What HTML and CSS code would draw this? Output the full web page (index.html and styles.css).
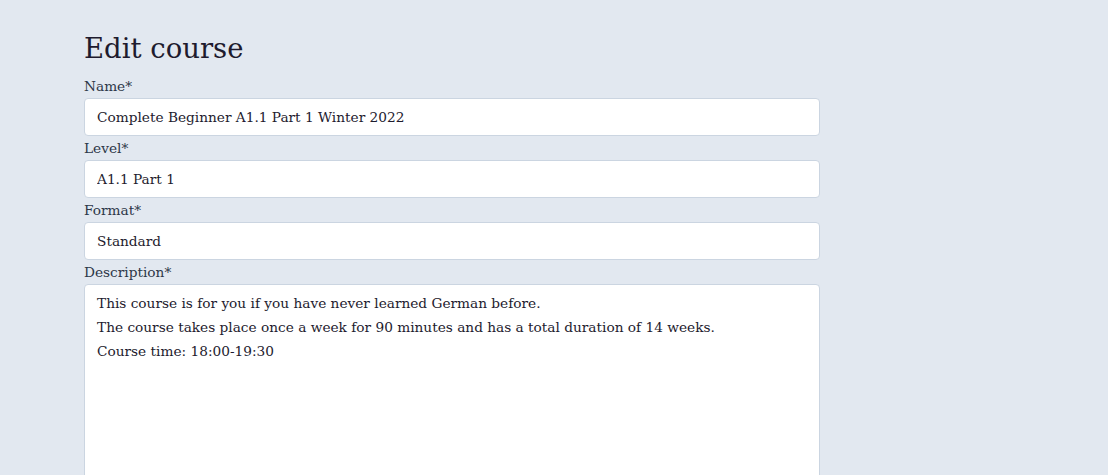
FILE: index.html
```html
<!DOCTYPE html>
<html>
<head>
<meta charset="utf-8">
<link rel="stylesheet" href="styles.css">
</head>
<body>
<main class="page">
  <h1 class="title">Edit course</h1>
  <form class="form">
    <label class="label" for="name">Name*</label>
    <input class="field" id="name" type="text" value="Complete Beginner A1.1 Part 1 Winter 2022">
    <label class="label" for="level">Level*</label>
    <input class="field" id="level" type="text" value="A1.1 Part 1">
    <label class="label" for="format">Format*</label>
    <input class="field" id="format" type="text" value="Standard">
    <label class="label" for="desc">Description*</label>
    <textarea class="field area" id="desc">This course is for you if you have never learned German before.
The course takes place once a week for 90 minutes and has a total duration of 14 weeks.
Course time: 18:00-19:30</textarea>
  </form>
</main>
</body>
</html>
```
FILE: styles.css
```css
html, body {
  margin: 0;
  padding: 0;
  background: #e2e8f0;
  overflow: hidden;
}
body {
  font-family: "DejaVu Serif", "Liberation Serif", serif;
  color: #1f2937;
  height: 475px;
}
.page {
  width: 736px;
  padding: 22px 0 0 84px;
}
.title {
  margin: 0;
  font-weight: 400;
  font-size: 27.5px;
  line-height: 52px;
  color: #1e1b2e;
}
.form {
  display: flex;
  flex-direction: column;
}
.label {
  font-size: 13.7px;
  line-height: 24px;
  color: #2d3748;
}
.field {
  box-sizing: border-box;
  width: 100%;
  height: 38px;
  padding: 6px 12px;
  border: 1px solid #cbd5e1;
  border-radius: 4px;
  background: #fff;
  font-family: inherit;
  font-size: 13.7px;
  line-height: 24px;
  color: #1e1b2e;
  margin: 0;
}
.area {
  height: 240px;
  resize: none;
  padding-top: 6px;
}
```
